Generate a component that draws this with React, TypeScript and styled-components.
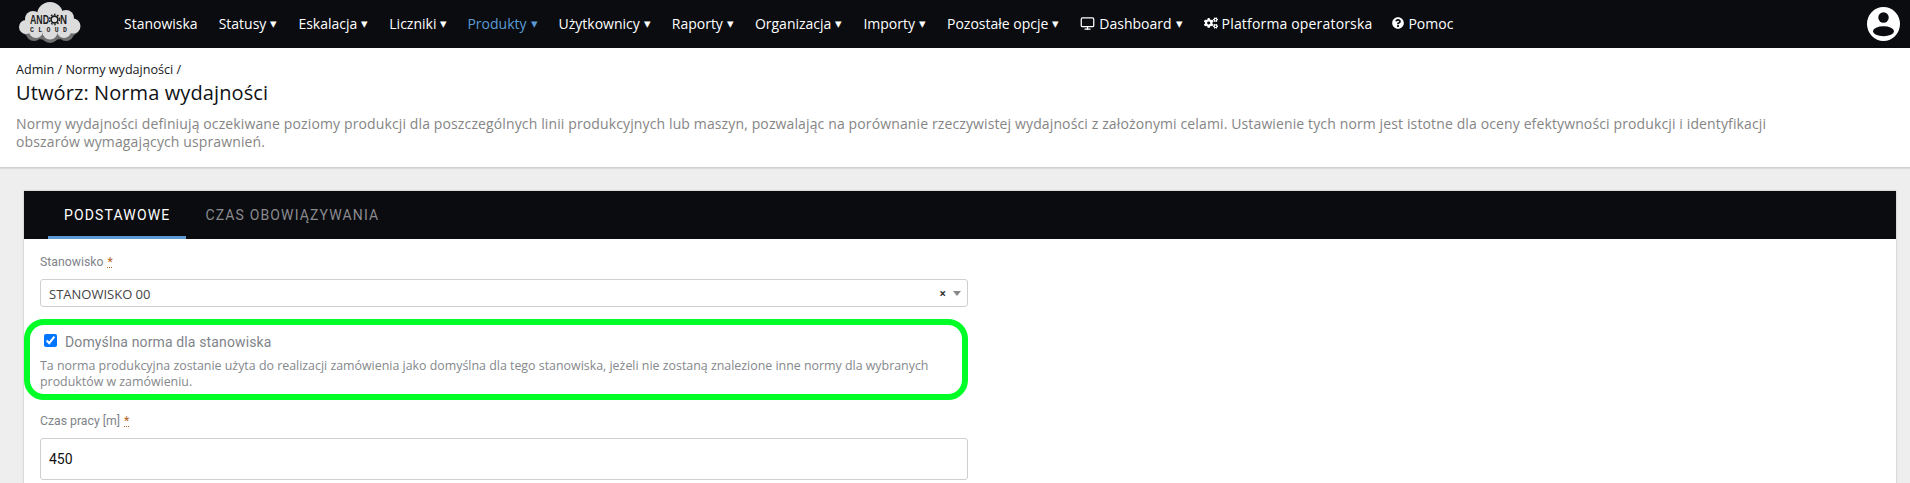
import React from "react";
import styled, { createGlobalStyle } from "styled-components";
import { FaCogs, FaQuestionCircle } from "react-icons/fa";
import { FiMonitor } from "react-icons/fi";

const Global = createGlobalStyle`
  html, body { margin: 0; padding: 0; height: 483px; overflow: hidden; background: #eeeeee; }
  * { box-sizing: border-box; }
  body { font-family: "Open Sans", "Liberation Sans", sans-serif; }
`;

const Page = styled.div`
  position: relative;
  height: 483px;
  overflow: hidden;
`;

const Navbar = styled.nav`
  height: 48px;
  background: #0a0c10;
  display: flex;
  align-items: center;
  padding: 0 10px 0 16px;
`;

const LogoBox = styled.div`
  width: 68px;
  height: 48px;
  margin-right: 40px;
  flex: none;
  display: flex;
  align-items: center;
`;

const NavItem = styled.a<{ $active?: boolean; $gap?: number; $spread?: number }>`
  display: inline-flex;
  align-items: center;
  gap: 4px;
  margin-left: ${(p) => p.$gap ?? 21}px;
  margin-top: -2px;
  font-size: 14px;
  letter-spacing: ${(p) => p.$spread ?? 0}px;
  white-space: nowrap;
  color: ${(p) => (p.$active ? "#5b9bd5" : "#ffffff")};
`;

const Caret = styled.span`
  font-size: 13px;
  line-height: 1;
`;

const Avatar = styled.div`
  margin-left: auto;
  width: 33px;
  height: 34px;
  display: flex;
`;

const Header = styled.header`
  background: #fff;
  height: 120px;
  padding: 14px 16px 0;
  border-bottom: 1px solid #cfcfcf;
  box-shadow: 0 1px 1px rgba(0, 0, 0, 0.08);
`;

const Crumb = styled.div`
  font-size: 12.6px;
  line-height: 16px;
  color: #16181c;
`;

const Title = styled.h1`
  margin: 1px 0 0;
  font-size: 20px;
  letter-spacing: 0.1px;
  line-height: 27px;
  font-weight: 400;
  color: #101215;
`;

const Lead = styled.p`
  margin: 9px 0 0;
  font-size: 14px;
  letter-spacing: 0.125px;
  line-height: 18px;
  max-width: 1800px;
  color: #858585;
`;

const Content = styled.main`
  padding: 23px 14px 0 24px;
`;

const Card = styled.section`
  background: #fff;
  min-height: 320px;
  box-shadow: 0 0 2px rgba(0, 0, 0, 0.25);
`;

const Tabs = styled.div`
  height: 48px;
  background: #0a0c10;
  display: flex;
  gap: 3px;
  padding-left: 24px;
`;

const Tab = styled.div<{ $active?: boolean }>`
  padding: 2px 16px 0;
  height: 48px;
  display: flex;
  align-items: center;
  font-family: Roboto, sans-serif;
  font-size: 14px;
  letter-spacing: 1.15px;
  text-transform: uppercase;
  color: ${(p) => (p.$active ? "#fff" : "#8a8a8f")};
  border-bottom: 3px solid ${(p) => (p.$active ? "#5b9bd5" : "transparent")};
`;

const Form = styled.div`
  width: 944px;
  padding: 15px 0 0 16px;
`;

const Label = styled.label`
  display: block;
  font-family: Roboto, sans-serif;
  font-size: 12.25px;
  line-height: 16px;
  color: #80848a;
`;

const Req = styled.abbr`
  color: #b5651d;
  margin-left: 4px;
  text-decoration: underline dotted;
`;

const Select = styled.div`
  margin-top: 9px;
  height: 28px;
  border: 1px solid #cfcfcf;
  border-radius: 3px;
  display: flex;
  align-items: center;
  padding: 1px 6px 0 8px;
  font-size: 13px;
  color: #444;
`;

const Clear = styled.span`
  margin-left: auto;
  font-size: 12px;
  font-weight: 700;
  color: #333;
`;

const Arrow = styled.span`
  margin-left: 7px;
  width: 0;
  height: 0;
  border-left: 4px solid transparent;
  border-right: 4px solid transparent;
  border-top: 5px solid #888;
`;

const CheckRow = styled.div`
  margin-top: 25px;
  padding-left: 4px;
  display: flex;
  align-items: center;
  height: 20px;
`;

const Check = styled.input`
  margin: -4px 8px 0 0;
  width: 13px;
  height: 13px;
  accent-color: #0075ff;
`;

const CheckLabel = styled.span`
  font-family: Roboto, sans-serif;
  font-size: 14px;
  letter-spacing: 0.13px;
  color: #80848a;
`;

const Help = styled.p`
  margin: 6px 0 0;
  font-size: 12.4px;
  line-height: 16px;
  color: #85888c;
`;

const FieldGap = styled.div`
  margin-top: 23px;
`;

const Input = styled.div`
  margin-top: 9px;
  height: 42px;
  border: 1px solid #cfcfcf;
  border-radius: 3px;
  display: flex;
  align-items: center;
  padding: 0 8px;
  font-family: Roboto, sans-serif;
  font-size: 14px;
  font-weight: 400;
  color: #111;
`;

const Highlight = styled.div`
  position: absolute;
  left: 24px;
  top: 319px;
  width: 944px;
  height: 81px;
  border: 6px solid #00ff26;
  border-radius: 20px;
  pointer-events: none;
`;

const Logo = () => (
  <svg width="68" height="48" viewBox="0 0 68 48">
    <g fill="#6f6f6f">
      <ellipse cx="34" cy="28" rx="30" ry="12" />
      <circle cx="18" cy="33" r="8" />
      <circle cx="34" cy="34" r="9" />
      <circle cx="50" cy="33" r="8" />
    </g>
    <g fill="#dcdcdc">
      <circle cx="34" cy="15" r="13" />
      <circle cx="17" cy="19" r="8" />
      <circle cx="50" cy="18" r="8" />
      <circle cx="10" cy="27" r="7" />
      <circle cx="57" cy="26" r="7.5" />
      <circle cx="20" cy="31" r="7" />
      <circle cx="34" cy="32" r="7.5" />
      <circle cx="48" cy="31" r="7" />
      <rect x="10" y="20" width="47" height="12" />
    </g>
    <g fill="#1d1d1d" fontFamily="'Liberation Sans', sans-serif" fontWeight="700">
      <text x="14" y="24" fontSize="13" textLength="19" lengthAdjust="spacingAndGlyphs">AND</text>
      <text x="44" y="24" fontSize="13" textLength="7" lengthAdjust="spacingAndGlyphs">N</text>
      <text x="14" y="32" fontSize="6.5" textLength="37" fontFamily="'Liberation Mono', monospace">CLOUD</text>
    </g>
    <circle cx="38.5" cy="19.5" r="3.4" fill="none" stroke="#1d1d1d" strokeWidth="1.6" />
    <circle cx="38.5" cy="19.5" r="5" fill="none" stroke="#1d1d1d" strokeWidth="1.6" strokeDasharray="1.6 1.6" />
  </svg>
);

const UserIcon = () => (
  <svg width="33" height="34" viewBox="0 0 33 34">
    <ellipse cx="16.5" cy="17" rx="16.5" ry="17" fill="#fff" />
    <circle cx="16.5" cy="10.5" r="5.2" fill="#0a0c10" />
    <ellipse cx="16.5" cy="24.2" rx="10.5" ry="5" fill="#0a0c10" />
  </svg>
);

const menu = [
  { t: "Stanowiska", caret: false, gap: 0 },
  { t: "Statusy", caret: true },
  { t: "Eskalacja", caret: true },
  { t: "Liczniki", caret: true },
  { t: "Produkty", caret: true, active: true, gap: 20 },
  { t: "Użytkownicy", caret: true },
  { t: "Raporty", caret: true },
  { t: "Organizacja", caret: true },
  { t: "Importy", caret: true },
  { t: "Pozostałe opcje", caret: true },
];

export default function App() {
  return (
    <Page>
      <Global />
      <Navbar>
        <LogoBox><Logo /></LogoBox>
        {menu.map((m) => (
          <NavItem key={m.t} $active={m.active} $gap={m.gap}>
            {m.t}
            {m.caret && <Caret>▾</Caret>}
          </NavItem>
        ))}
        <NavItem>
          <FiMonitor size={15} />
          Dashboard
          <Caret>▾</Caret>
        </NavItem>
        <NavItem $spread={0.17}>
          <FaCogs size={14} />
          Platforma operatorska
        </NavItem>
        <NavItem $gap={20}>
          <FaQuestionCircle size={12} />
          Pomoc
        </NavItem>
        <Avatar><UserIcon /></Avatar>
      </Navbar>
      <Header>
        <Crumb>Admin / Normy wydajności /</Crumb>
        <Title>Utwórz: Norma wydajności</Title>
        <Lead>
          Normy wydajności definiują oczekiwane poziomy produkcji dla poszczególnych linii produkcyjnych lub maszyn, pozwalając na porównanie rzeczywistej wydajności z założonymi celami. Ustawienie tych norm jest istotne dla oceny efektywności produkcji i identyfikacji obszarów wymagających usprawnień.
        </Lead>
      </Header>
      <Content>
        <Card>
          <Tabs>
            <Tab $active>Podstawowe</Tab>
            <Tab>Czas obowiązywania</Tab>
          </Tabs>
          <Form>
            <Label>Stanowisko<Req title="wymagane">*</Req></Label>
            <Select>
              STANOWISKO 00
              <Clear>×</Clear>
              <Arrow />
            </Select>
            <CheckRow>
              <Check type="checkbox" defaultChecked />
              <CheckLabel>Domyślna norma dla stanowiska</CheckLabel>
            </CheckRow>
            <Help>
              Ta norma produkcyjna zostanie użyta do realizacji zamówienia jako domyślna dla tego stanowiska, jeżeli nie zostaną znalezione inne normy dla wybranych produktów w zamówieniu.
            </Help>
            <FieldGap>
              <Label>Czas pracy [m]<Req title="wymagane">*</Req></Label>
              <Input>450</Input>
            </FieldGap>
          </Form>
        </Card>
      </Content>
      <Highlight />
    </Page>
  );
}
